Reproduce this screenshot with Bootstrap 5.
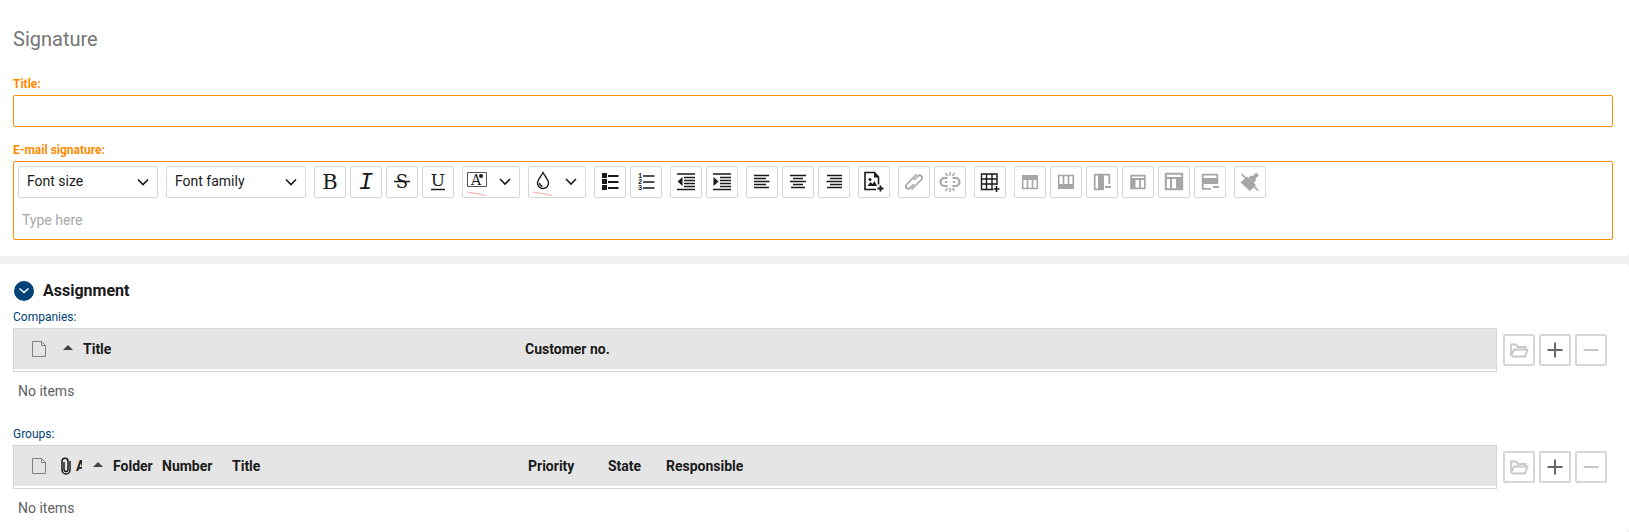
<!DOCTYPE html>
<html lang="en">
<head>
<meta charset="utf-8">
<meta name="viewport" content="width=device-width, initial-scale=1">
<title>Signature</title>
<link href="https://cdn.jsdelivr.net/npm/bootstrap@5.3.0/dist/css/bootstrap.min.css" rel="stylesheet">
<style>
  body { font-family: Roboto, "Liberation Sans", sans-serif; font-size: 14px; line-height: 20px; color: #1a1a1a; background: #f0f0f0; }
  .panel { background: #fff; border-radius: 0 4px 4px 0; padding: 0 16px 16px 13px; }
  .panel.required { border-top-right-radius: 0; }
  .panel-rest { min-height: calc(100vh - 264px); padding-bottom: 8px; }
  .page-title { font-size: 20px; line-height: 24px; font-weight: 400; color: #757575; padding-top: 27px; margin-bottom: 25px; }
  .field-label { display: block; font-size: 12px; line-height: 16px; margin: 0 0 3px; color: #004178; }
  .required .field-label { font-weight: 700; color: #ff8c00; }
  .required .form-control, .editor { border: 1px solid #ff8c00; border-radius: 2px; }
  .required .title-input { height: 32px; min-height: 32px; padding: 4px 8px; font-size: 14px; margin-bottom: 15px; }
  .editor { padding: 4px; }
  .editor textarea { display: block; width: 100%; height: 37px; border: 0; outline: 0; resize: none; padding: 12px 4px 4px; line-height: 20px; overflow: hidden; }
  .editor textarea::placeholder { color: #a8a8a8; opacity: 1; }
  .tool-group { display: flex; gap: 4px; }
  .tool { height: 32px; min-width: 32px; padding: 0; border: 1px solid #d6d6d6; border-radius: 2px; background: #fff; color: #1a1a1a; display: flex; }
  .tool:disabled { color: #a6a6a6; }
  .tool svg, .act svg { display: block; fill: none; stroke: currentColor; stroke-width: 2; }
  .tool .f, .act .f { fill: currentColor; stroke: none; }
  .tool text { fill: currentColor; stroke: none; font-family: "DejaVu Serif", serif; text-anchor: middle; }
  .tool .mono { font-family: "Liberation Mono", monospace; }
  .thin { stroke-width: 1; }
  .picker { width: 140px; height: 32px; padding: 0 28px 2px 8px; font-size: 14px; line-height: 20px; border: 1px solid #d6d6d6; border-radius: 2px; color: #1a1a1a;
    background-image: url("data:image/svg+xml,%3Csvg xmlns='http://www.w3.org/2000/svg' viewBox='0 0 12 8'%3E%3Cpath d='M1 1.5l5 5 5-5' fill='none' stroke='%231a1a1a' stroke-width='1.6'/%3E%3C/svg%3E");
    background-size: 12px 8px; background-position: right 8px center; }
  .section-head { gap: 9px; padding: 17px 0 8px 1px; }
  .toggle { width: 20px; height: 20px; padding: 0; border: 0; border-radius: 50%; background: #004178; color: #fff; }
  .toggle svg { display: block; }
  .section-title { font-size: 16px; line-height: 20px; font-weight: 700; margin: 0; }
  .grid-box { border: 1px solid #d6d6d6; padding-bottom: 2px; }
  .grid-table { width: 100%; table-layout: fixed; border-collapse: collapse; }
  .grid-table th { height: 40px; padding: 0; background: #e5e5e5; font-weight: 700; white-space: nowrap; overflow: hidden; vertical-align: middle; }
  .grid-table th:first-child { padding-left: 18px; }
  .grid-table svg { display: block; }
  .sort { display: inline-block; border: 5px solid transparent; border-top: 0; border-bottom-color: #444; margin: 0 10px 0 3px; vertical-align: 4px; }
  .sort-inset { margin-left: 11px; }
  .w-icon { width: 46px; } .w-clip { width: 22px; } .w-folder { width: 80px; } .w-number { width: 70px; }
  .w-gtitle { width: 296px; } .w-prio { width: 80px; } .w-state { width: 58px; } .w-ctitle { width: 465px; }
  .empty { color: #606060; margin: 0 0 25px; padding: 9px 5px 0; }
  .acts { padding: 6px 6px 0; gap: 4px; }
  .act { width: 32px; height: 32px; padding: 0; border: 2px solid #d6d6d6; border-radius: 2px; background: #fff; color: #666; }
  .act:disabled { color: #c8c8c8; }
</style>
</head>
<body>
<main>
  <section class="panel required mb-2">
    <h1 class="page-title">Signature</h1>
    <label class="field-label" for="title">Title:</label>
    <input class="form-control title-input" id="title" type="text">
    <label class="field-label" for="body-text">E-mail signature:</label>
    <div class="editor">
      <div class="d-flex flex-wrap gap-2" role="toolbar" aria-label="Formatting">
        <select class="form-select picker" aria-label="Font size"><option>Font size</option></select>
        <select class="form-select picker" aria-label="Font family"><option>Font family</option></select>
        <div class="tool-group">
          <button class="tool" type="button" aria-label="Bold"><svg width="30" height="30" viewBox="1 1 30 30"><text x="16" y="23" font-size="21">B</text></svg></button>
          <button class="tool" type="button" aria-label="Italic"><svg width="30" height="30" viewBox="1 1 30 30"><text class="mono" x="16" y="23" font-size="24" font-style="italic">I</text></svg></button>
          <button class="tool" type="button" aria-label="Strikethrough"><svg width="30" height="30" viewBox="1 1 30 30"><text x="16" y="22" font-size="18">S</text><path d="M8 15.500h16" stroke-width="1.500"/></svg></button>
          <button class="tool" type="button" aria-label="Underline"><svg width="30" height="30" viewBox="1 1 30 30"><text x="16" y="20" font-size="17">U</text><path d="M9 23.500h14" stroke-width="1.500"/></svg></button>
        </div>
        <button class="tool" type="button" aria-label="Text color"><svg width="56" height="30" viewBox="1 1 56 30"><path class="thin" stroke="#555" d="M5.500 20.500V6.500H24.500V20.500Z"/><text x="14" y="19" font-size="14">A</text><circle class="f" cx="19" cy="10" r="2"/><path d="M5 26l9 1.500 10 2" stroke="#f3aaa5" class="thin"/><path d="M38 13l5 5 5-5" stroke-width="1.600"/></svg></button>
        <button class="tool" type="button" aria-label="Background color"><svg width="56" height="30" viewBox="1 1 56 30"><path d="M15 6.500c-2 4-5.500 7-5.500 10.500a5.500 5.500 0 0 0 11 0c0-3.500-3.500-6.500-5.500-10.500z" stroke-width="1.400"/><path d="M11.500 17a3.500 3.500 0 0 0 3 3.200" stroke-width="1.400"/><path d="M5 26l9 1.500 10 2" stroke="#f3aaa5" class="thin"/><path d="M38 13l5 5 5-5" stroke-width="1.600"/></svg></button>
        <div class="tool-group">
          <button class="tool" type="button" aria-label="Bullet list"><svg width="30" height="30" viewBox="1 1 30 30"><path class="f" d="M8 7h5v5H8zM8 13h5v5H8zM8 19h5v5H8z"/><path d="M14 10h10.500M14 16h10.500M14 22h10.500"/></svg></button>
          <button class="tool" type="button" aria-label="Numbered list"><svg width="30" height="30" viewBox="1 1 30 30"><g font-size="7" font-weight="700"><text class="mono" x="10" y="12">1</text><text class="mono" x="10" y="18">2</text><text class="mono" x="10" y="24">3</text></g><path d="M13 10h11.500M13 16h11.500M13 22h11.500" stroke-width="1.500"/></svg></button>
        </div>
        <div class="tool-group">
          <button class="tool" type="button" aria-label="Outdent"><svg width="30" height="30" viewBox="1 1 30 30"><path d="M7 8h18M14 11.500h11M14 14.500h11M14 17.500h11M14 20.500h11M7 23.500h18" stroke-width="1.400"/><path class="f" d="M7.500 15.500l5-4.500v9z"/></svg></button>
          <button class="tool" type="button" aria-label="Indent"><svg width="30" height="30" viewBox="1 1 30 30"><path d="M7 8h18M14 11.500h11M14 14.500h11M14 17.500h11M14 20.500h11M7 23.500h18" stroke-width="1.400"/><path class="f" d="M12.500 15.500l-5-4.500v9z"/></svg></button>
        </div>
        <div class="tool-group">
          <button class="tool" type="button" aria-label="Align left"><svg width="30" height="30" viewBox="1 1 30 30"><path d="M8 9.500h15M8 12.500h12M8 15.500h15.500M8 18.500h12M8 21.500h15" stroke-width="1.400"/></svg></button>
          <button class="tool" type="button" aria-label="Align center"><svg width="30" height="30" viewBox="1 1 30 30"><path d="M8 9.500h16M11 12.500h10M8 15.500h16M11 18.500h10M9 21.500h14" stroke-width="1.400"/></svg></button>
          <button class="tool" type="button" aria-label="Align right"><svg width="30" height="30" viewBox="1 1 30 30"><path d="M9 9.500h15M12 12.500h12M8.500 15.500h15.500M12 18.500h12M9 21.500h15" stroke-width="1.400"/></svg></button>
        </div>
        <button class="tool" type="button" aria-label="Insert image"><svg width="30" height="30" viewBox="1 1 30 30"><path d="M18 23.500H7V6.500h9.500L20.500 11v7.500" stroke-width="1.600"/><path class="f" d="M16 6v5.500h5.500zM9.500 20l3-4 2 2 2-3 2.500 5z"/><circle class="f" cx="12" cy="13.500" r="1.500"/><path d="M22.500 19.500v6M19.500 22.500h6" stroke-width="1.800"/></svg></button>
        <div class="tool-group">
          <button class="tool" type="button" disabled aria-label="Insert link"><svg width="30" height="30" viewBox="1 1 30 30"><path d="M18.500 8.500L9 18q-2 2-.5 4q1.800 1.500 3.500 0L16 18M13.500 23.500L23 14q2-2 .5-4q-1.800-1.500-3.500 0L16 14" stroke-width="1.700"/></svg></button>
          <button class="tool" type="button" disabled aria-label="Remove link"><svg width="30" height="30" viewBox="1 1 30 30"><path d="M13.500 12h-3a4 4 0 0 0 0 8h3M18.500 12h3a4 4 0 0 1 0 8h-3M11 16h2M19 16h2" stroke-width="2.200"/><path d="M16 6v4M11.500 7l2 3M20.500 7l-2 3M16 26v-4M11.500 25l2-3M20.500 25l-2-3" stroke-width="1.400"/></svg></button>
        </div>
        <button class="tool" type="button" aria-label="Insert table"><svg width="30" height="30" viewBox="1 1 30 30"><path d="M19 23.500H7.500V8H23v11M7.500 13H23M7.500 18H23M12.500 8v15.500M18 8v15.500" stroke-width="1.400"/><path d="M22.500 20v6M19.500 23h6" stroke-width="1.600"/></svg></button>
        <div class="tool-group">
          <button class="tool" type="button" disabled aria-label="Insert row above"><svg width="30" height="30" viewBox="1 1 30 30"><path class="f" d="M8 9h16v5H8z"/><path d="M8.700 13v9.500h14.600V13M13.500 13v9.500M18.500 13v9.500" stroke-width="1.600"/></svg></button>
          <button class="tool" type="button" disabled aria-label="Insert row below"><svg width="30" height="30" viewBox="1 1 30 30"><path class="f" d="M8 18h16v5H8z"/><path d="M8.700 19V9.500h14.600V19M13.500 19V9.500M18.500 19V9.500" stroke-width="1.600"/></svg></button>
          <button class="tool" type="button" disabled aria-label="Delete column"><svg width="30" height="30" viewBox="1 1 30 30"><path class="f" d="M12 8h6v16h-6z"/><path d="M17 23.300H8.700V8.700h14.600V18M19 21h6" stroke-width="1.800"/></svg></button>
          <button class="tool" type="button" disabled aria-label="Insert column left"><svg width="30" height="30" viewBox="1 1 30 30"><path class="f" d="M8.500 13h5v10h-5z"/><path d="M9.200 9.700h13.600v12.600H9.200zM9.200 13h13.600M18 13v9.500" stroke-width="1.800"/></svg></button>
          <button class="tool" type="button" disabled aria-label="Insert column right"><svg width="30" height="30" viewBox="1 1 30 30"><path class="f" d="M18 12h7v12h-7z"/><path d="M7.800 7.800h16.400v15.400H7.800zM7.800 12h16.400M13 12v11.500" stroke-width="2"/></svg></button>
          <button class="tool" type="button" disabled aria-label="Delete row"><svg width="30" height="30" viewBox="1 1 30 30"><path class="f" d="M8 12h16v6H8z"/><path d="M17 22.800H8.700V8.700h14.600V17M19 21h6" stroke-width="1.800"/></svg></button>
        </div>
        <button class="tool" type="button" disabled aria-label="Clear formatting"><svg width="30" height="30" viewBox="1 1 30 30"><path class="f" d="M6.500 16.500l6.500-6L22 19l-6 6zM14.500 11.500l3-2 1.500.500 3-3.500 3 3-3.500 3 .500 1.500-2 3z"/><path d="M7.500 8L24 24.500" stroke-width="1.700"/></svg></button>
      </div>
      <textarea id="body-text" placeholder="Type here"></textarea>
    </div>
  </section>

  <section class="panel panel-rest">
    <div class="section-head d-flex align-items-center">
      <button class="toggle" type="button" aria-label="Collapse" aria-expanded="true"><svg width="20" height="20" fill="none" stroke="currentColor" stroke-width="1.600"><path d="M5.500 7.500l4.500 4 4.500-4"/></svg></button>
      <h2 class="section-title">Assignment</h2>
    </div>
    <div class="field-label">Companies:</div>
    <div class="d-flex">
      <div class="flex-grow-1">
        <div class="grid-box">
          <table class="grid-table" aria-label="Companies">
            <colgroup><col class="w-icon"><col class="w-ctitle"><col></colgroup>
            <thead><tr>
              <th scope="col" aria-label="Type"><svg width="14" height="16" fill="none" stroke="#808080"><path d="M.5.5h9l4 4v11H.5zM9.500.5v4h4"/></svg></th>
              <th scope="col"><span class="sort"></span>Title</th>
              <th scope="col">Customer no.</th>
            </tr></thead>
          </table>
        </div>
        <p class="empty">No items</p>
      </div>
      <div class="acts d-flex">
        <button class="act" type="button" disabled aria-label="Open"><svg width="28" height="28" viewBox="2 2 28 28"><path d="M8 22V10.500h5l2 2.500h7.500v3M8 22l3-6.500h13.500L22 22.500H8.500" stroke-width="1.800"/></svg></button>
        <button class="act" type="button" aria-label="Add"><svg width="28" height="28" viewBox="2 2 28 28"><path d="M16 8.500v15M8.500 16h15"/></svg></button>
        <button class="act" type="button" disabled aria-label="Remove"><svg width="28" height="28" viewBox="2 2 28 28"><path d="M8.500 16h15"/></svg></button>
      </div>
    </div>
    <div class="field-label">Groups:</div>
    <div class="d-flex">
      <div class="flex-grow-1">
        <div class="grid-box">
          <table class="grid-table" aria-label="Groups">
            <colgroup><col class="w-icon"><col class="w-clip"><col class="w-folder"><col class="w-number"><col class="w-gtitle"><col class="w-prio"><col class="w-state"><col></colgroup>
            <thead><tr>
              <th scope="col" aria-label="Type"><svg width="14" height="16" fill="none" stroke="#808080"><path d="M.5.5h9l4 4v11H.5zM9.500.5v4h4"/></svg></th>
              <th scope="col"><div class="d-flex align-items-center gap-1"><svg class="flex-shrink-0" width="12" height="18" fill="none" stroke="#1a1a1a" stroke-width="1.500"><path d="M4 5v7.500a2 2 0 0 0 4 0V4.500a3 3 0 0 0-6-.5v9a4 4 0 0 0 8 0V4"/></svg>A</div></th>
              <th scope="col"><span class="sort sort-inset"></span>Folder</th>
              <th scope="col">Number</th>
              <th scope="col">Title</th>
              <th scope="col">Priority</th>
              <th scope="col">State</th>
              <th scope="col">Responsible</th>
            </tr></thead>
          </table>
        </div>
        <p class="empty mb-0">No items</p>
      </div>
      <div class="acts d-flex">
        <button class="act" type="button" disabled aria-label="Open"><svg width="28" height="28" viewBox="2 2 28 28"><path d="M8 22V10.500h5l2 2.500h7.500v3M8 22l3-6.500h13.500L22 22.500H8.500" stroke-width="1.800"/></svg></button>
        <button class="act" type="button" aria-label="Add"><svg width="28" height="28" viewBox="2 2 28 28"><path d="M16 8.500v15M8.500 16h15"/></svg></button>
        <button class="act" type="button" disabled aria-label="Remove"><svg width="28" height="28" viewBox="2 2 28 28"><path d="M8.500 16h15"/></svg></button>
      </div>
    </div>
  </section>
</main>
<script src="https://cdn.jsdelivr.net/npm/bootstrap@5.3.0/dist/js/bootstrap.bundle.min.js"></script>
</body>
</html>
